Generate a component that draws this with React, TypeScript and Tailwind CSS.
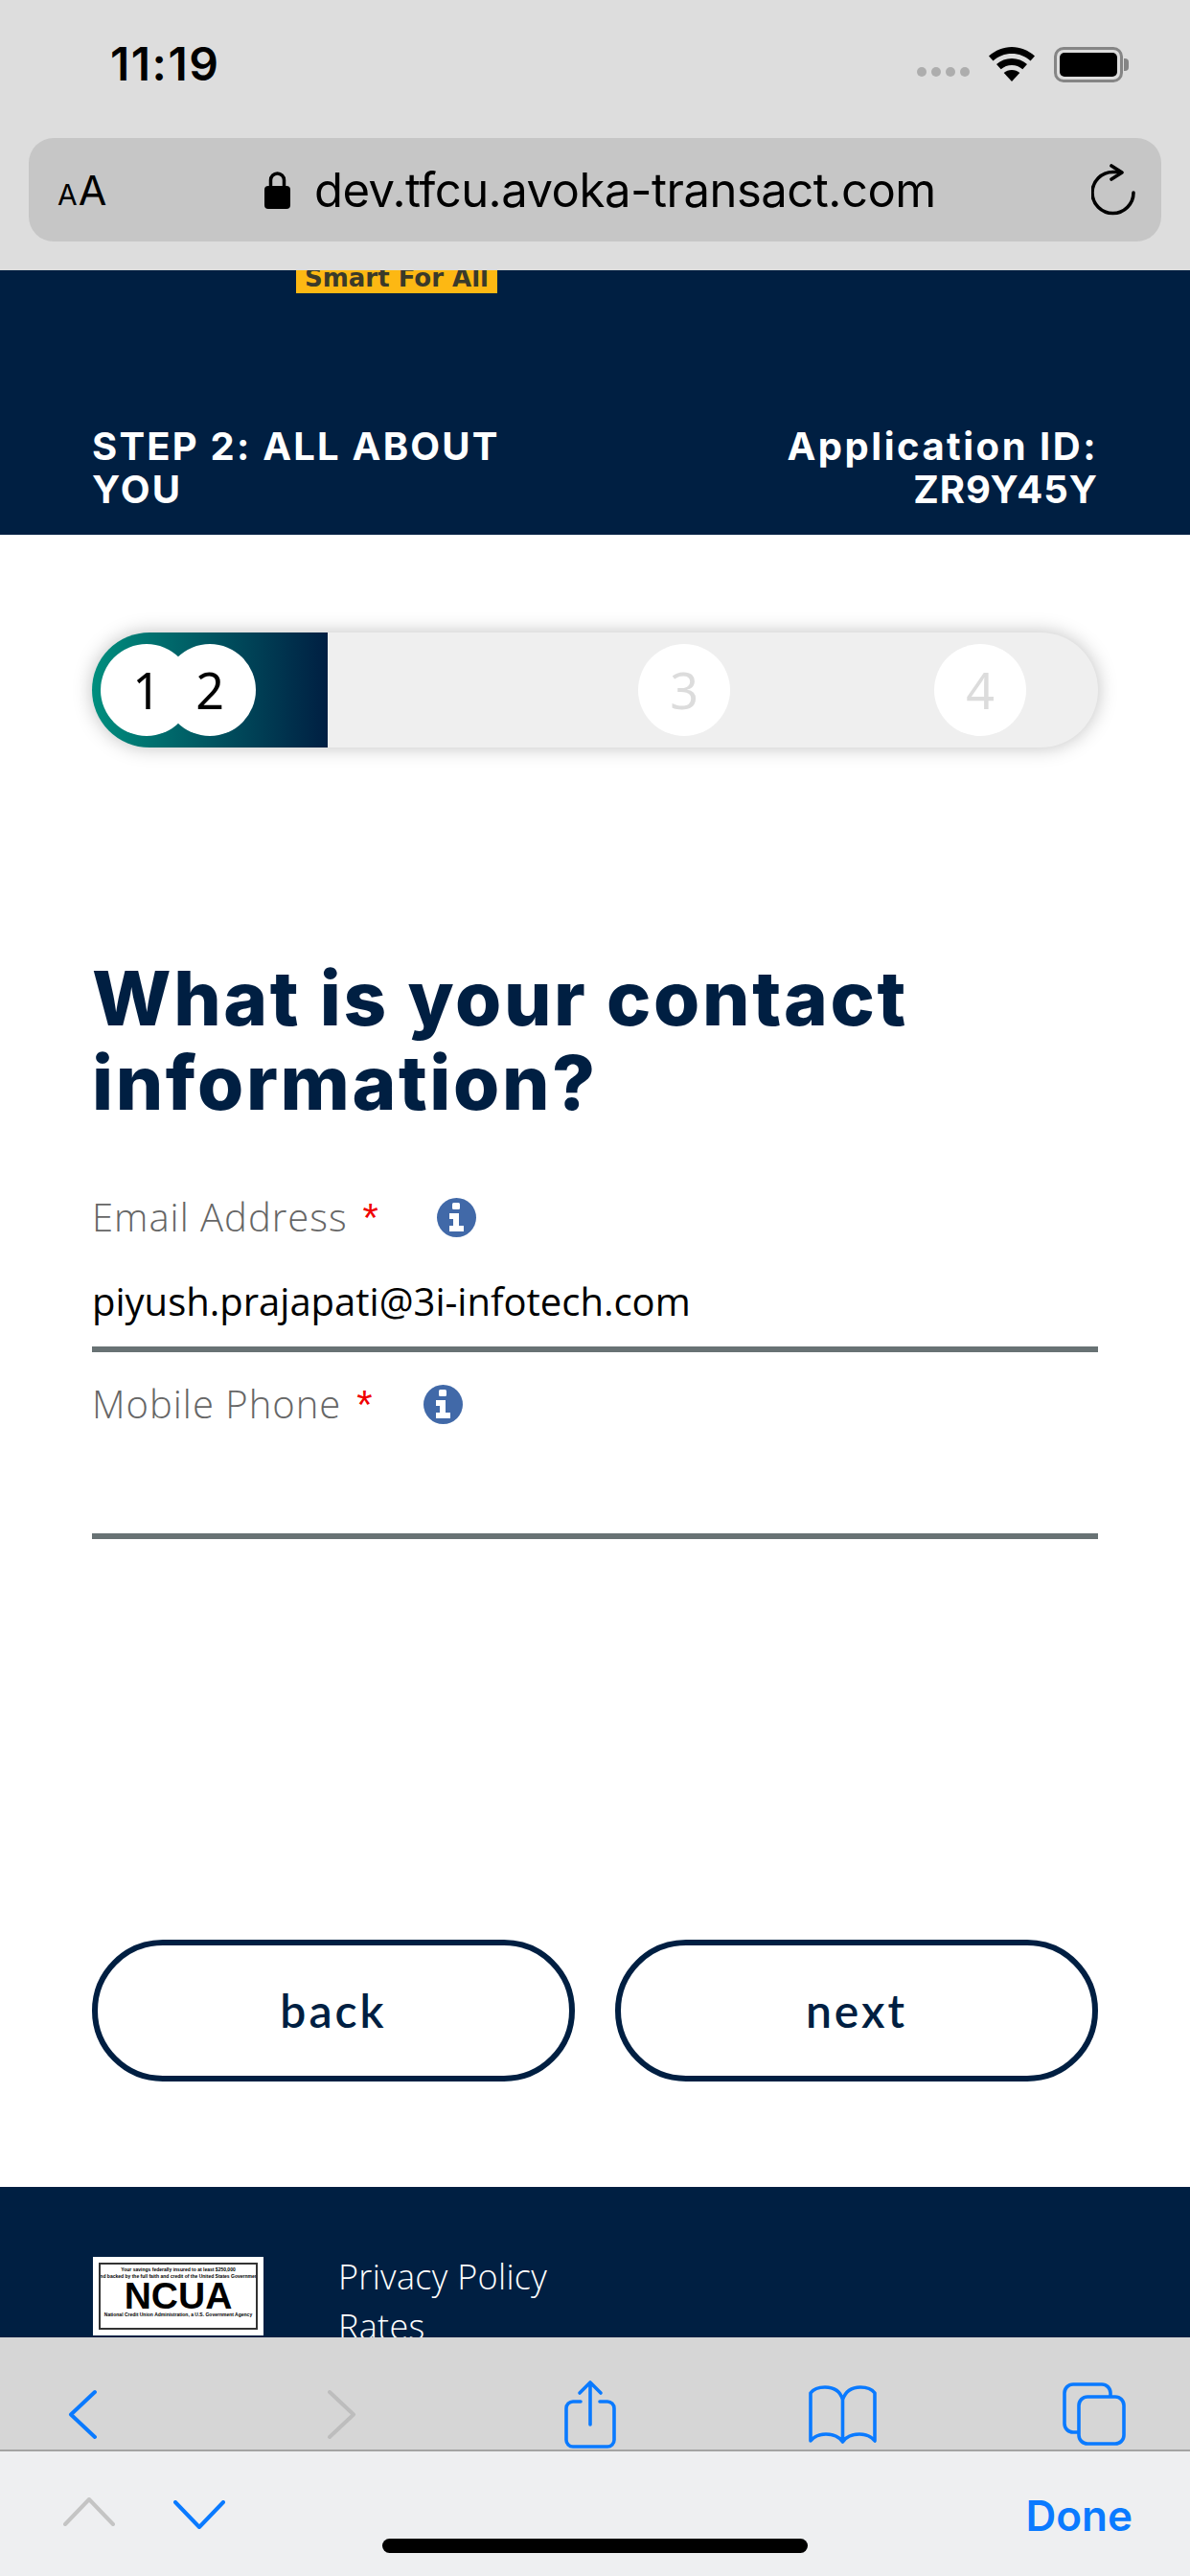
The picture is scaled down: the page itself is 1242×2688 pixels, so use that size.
import type { ReactNode } from 'react';

const HEAD_FONT = 'font-["Inter",sans-serif]';
const BODY_FONT = 'font-["Open_Sans",sans-serif]';

function InfoIcon({ className }: { className: string }) {
  return (
    <svg viewBox="0 0 41 41" className={className}>
      <circle cx="20.5" cy="20.500" r="20.500" fill="#4169a8" />
      <rect x="16" y="5" width="8" height="7" rx="1.500" fill="#fff" />
      <path d="M13 16h10v13h5v6H13v-6h4v-7h-4z" fill="#fff" />
    </svg>
  );
}

function Field({ label, value, iconGap }: { label: string; value?: string; iconGap: string }) {
  return (
    <div className="flex flex-col">
      <div className={`flex h-[54px] items-center text-[40px] font-light tracking-[1px] text-[#666666] ${BODY_FONT}`}>
        <span>{label}</span>
        <span className="ml-[16px] mt-[2px] h-[40px] font-['Liberation_Sans',sans-serif] text-[42px] font-normal leading-[40px] text-[#f00000]">*</span>
        <InfoIcon className={`h-[41px] w-[41px] ${iconGap}`} />
      </div>
      <div className={`flex h-[108px] items-center pt-[14px] text-[40px] text-black ${BODY_FONT}`}>{value}</div>
      <div className="h-[6px] bg-[#687274]" />
    </div>
  );
}

function Step({ n, active, className = '' }: { n: number; active?: boolean; className?: string }) {
  return (
    <div
      className={`relative flex h-[96px] w-[96px] shrink-0 items-center justify-center rounded-full bg-white text-[52px] font-["Noto_Sans",sans-serif] ${
        active ? 'text-black' : 'text-[#dcdcdc]'
      } ${className}`}
    >
      {n}
    </div>
  );
}

function PillButton({ children }: { children: ReactNode }) {
  return (
    <button className={`flex h-[148px] w-[504px] items-center justify-center rounded-full border-[6px] border-[#001f42] font-["Lato",sans-serif] text-[48px] font-semibold tracking-[3px] text-[#001f42]`}>
      {children}
    </button>
  );
}

function NcuaLogo() {
  return (
    <div className="mt-[5px] h-[82px] w-[178px] shrink-0 bg-white p-[6px] font-['Liberation_Sans',sans-serif]">
      <div className="flex h-full flex-col items-center overflow-hidden border-[2px] border-[#333] pt-[2px] text-center text-black">
        <div className="whitespace-nowrap text-[5px] font-bold leading-[7px]">Your savings federally insured to at least $250,000</div>
        <div className="whitespace-nowrap text-[5px] font-bold leading-[6px]">and backed by the full faith and credit of the United States Government</div>
        <div className="mt-[1px] text-[39px] font-bold leading-[33px]">NCUA</div>
        <div className="whitespace-nowrap text-[5px] font-bold leading-[7px]">National Credit Union Administration, a U.S. Government Agency</div>
      </div>
    </div>
  );
}

export default function App() {
  return (
    <div className="flex h-[2688px] w-[1242px] flex-col overflow-hidden bg-white">
      {/* Safari top chrome */}
      <div className="h-[282px] shrink-0 bg-[#dddddd]">
        <div className="flex h-[134px] items-center pl-[115px] pr-[64px]">
          <span className="text-[48px] font-semibold tracking-[1.5px] text-black font-['Inter',sans-serif]">11:19</span>
          <div className="ml-auto flex items-center">
            <div className="mt-[16px] flex gap-[5px]">
              <i className="h-[10px] w-[10px] rounded-full bg-[#adadad]" />
              <i className="h-[10px] w-[10px] rounded-full bg-[#adadad]" />
              <i className="h-[10px] w-[10px] rounded-full bg-[#adadad]" />
              <i className="h-[10px] w-[10px] rounded-full bg-[#adadad]" />
            </div>
            <svg viewBox="0 0 48 36" className="ml-[20px] h-[36px] w-[48px]">
              <path d="M24 0C15 0 7 3.500 0 9.500l4.500 5C10 9.500 16.500 7 24 7s14 2.500 19.500 7.500l4.500-5C41 3.500 33 0 24 0z" />
              <path d="M24 12c-6 0-11.500 2-16 6l4.700 5.200C16 20.500 19.800 19 24 19s8 1.500 11.300 4.200L40 18c-4.500-4-10-6-16-6z" />
              <path d="M24 24c-3.300 0-6 1-8.300 3L24 36l8.300-9c-2.300-2-5-3-8.300-3z" />
            </svg>
            <div className="ml-[20px] flex items-center">
              <div className="h-[37px] w-[72px] rounded-[10px] border-[3px] border-[#858585] p-[3px]">
                <div className="h-full rounded-[5px] bg-black" />
              </div>
              <div className="ml-[1px] h-[13px] w-[5px] rounded-r-[4px] bg-[#858585]" />
            </div>
          </div>
        </div>
        <div className="mx-[30px] mt-[10px] flex h-[108px] items-center rounded-[26px] bg-[#c6c6c6] pl-[30px] pr-[27px] text-black">
          <div className="flex w-[60px] items-baseline font-['Inter',sans-serif]">
            <span className="text-[30px] leading-none">A</span>
            <span className="ml-[1px] text-[43px] leading-none">A</span>
          </div>
          <svg viewBox="0 0 27 40" className="ml-[156px] h-[40px] w-[27px] shrink-0">
            <path d="M6.500 17V10a7 7 0 0 1 14 0v7" fill="none" stroke="#000" strokeWidth="3.500" />
            <rect x="0" y="16" width="27" height="24" rx="4" />
          </svg>
          <span className="ml-[25px] text-[49px] leading-none tracking-[-0.5px] font-['Inter',sans-serif]">dev.tfcu.avoka-transact.com</span>
          <svg viewBox="0 0 46 54" className="ml-auto h-[54px] w-[46px] shrink-0" fill="none" stroke="#000" strokeWidth="3.600" strokeLinecap="round" strokeLinejoin="round">
            <path d="M44 30a21.500 21.500 0 1 1-21.500-21.500H29" />
            <path d="M21 2l11 7-11 7" />
          </svg>
        </div>
      </div>

      {/* Page content, clipped by the browser bars */}
      <div className="min-h-0 flex-1 overflow-hidden">
        <div className="h-[276px] bg-[#001f42]">
          <div className="ml-[309px] h-[24px] w-[210px] overflow-hidden bg-[#fdb813] text-center font-['DejaVu_Sans',sans-serif] text-[26px] font-bold leading-[16px] text-[#3a3a2a]">
            Smart For All
          </div>
          <div className={`mt-[137px] flex justify-between px-[96px] text-[40px] font-bold leading-[45px] text-white ${HEAD_FONT}`}>
            <div className="w-[440px] tracking-[2.2px]">STEP 2: ALL ABOUT YOU</div>
            <div className="text-right">
              <div className="tracking-[2.5px]">Application ID:</div>
              <div className="tracking-[1px]">ZR9Y45Y</div>
            </div>
          </div>
        </div>

        <div className="px-[96px]">
          <div className="relative mt-[102px] flex h-[120px] items-center rounded-full bg-[#efefef] pl-[9px] shadow-[0_0_20px_rgba(0,0,0,0.25)]">
            <div className="absolute inset-y-0 left-0 w-[246px] rounded-l-full rounded-r-[3px] bg-gradient-to-r from-[#008f7e] to-[#001f42]" />
            <Step n={1} active />
            <Step n={2} active className="-ml-[30px]" />
            <Step n={3} className="ml-[399px]" />
            <Step n={4} className="ml-[213px]" />
          </div>

          <h1 className={`mt-[218px] text-[78px] font-extrabold leading-[88px] tracking-[2.6px] text-[#001f42] ${HEAD_FONT}`}>
            What is your contact information?
          </h1>

          <div className="mt-[69px] flex flex-col gap-[27px]">
            <Field label="Email Address" value="piyush.prajapati@3i-infotech.com" iconGap="ml-[60px]" />
            <Field label="Mobile Phone" iconGap="ml-[52px]" />
          </div>

          <div className="mt-[418px] flex justify-between">
            <PillButton>back</PillButton>
            <PillButton>next</PillButton>
          </div>
        </div>

        <div className="mt-[110px] flex bg-[#001f42] pb-[40px] pl-[97px] pt-[68px]">
          <NcuaLogo />
          <div className={`ml-[78px] text-[36px] font-light leading-[52px] tracking-[0.3px] text-white ${BODY_FONT}`}>
            <div>Privacy Policy</div>
            <div>Rates</div>
          </div>
        </div>
      </div>

      {/* Safari bottom toolbar + keyboard accessory */}
      <div className="h-[249px] shrink-0">
        <div className="flex h-[119px] items-center border-b-[2px] border-[#a3a3a3] bg-[#d6d6d6] pl-[71px] pt-[43px]">
          <svg viewBox="0 0 31 53" className="h-[53px] w-[31px]" fill="none" stroke="#0a7aff" strokeWidth="4" strokeLinecap="round" strokeLinejoin="round"><path d="M28 3L3 26.500 28 50" /></svg>
          <svg viewBox="0 0 31 53" className="ml-[239px] h-[53px] w-[31px]" fill="none" stroke="#bdbdbd" strokeWidth="4" strokeLinecap="round" strokeLinejoin="round"><path d="M3 3l25 23.500L3 50" /></svg>
          <svg viewBox="0 0 54 72" className="ml-[217px] h-[72px] w-[54px]" fill="none" stroke="#0a7aff" strokeWidth="3.600" strokeLinecap="round" strokeLinejoin="round">
            <path d="M17 23H9a7 7 0 0 0-7 7v33a7 7 0 0 0 7 7h36a7 7 0 0 0 7-7V30a7 7 0 0 0-7-7h-8" />
            <path d="M27 47V3M16 14L27 3l11 11" />
          </svg>
          <svg viewBox="0 0 71 61" className="ml-[201px] h-[61px] w-[71px]" fill="none" stroke="#0a7aff" strokeWidth="3.600" strokeLinejoin="round">
            <path d="M35.500 15C33 6 26 2 17 2 10 2 5 4 2 8v50c4-5 10-7 16-7 8 0 14 3 17.500 8 3.500-5 9.500-8 17.500-8 6 0 12 2 16 7V8c-3-4-8-6-15-6-9 0-15.500 4-18.500 13zv44" />
          </svg>
          <svg viewBox="0 0 66 66" className="ml-[194px] h-[66px] w-[66px]" fill="none" stroke="#0a7aff" strokeWidth="3.600" strokeLinejoin="round">
            <path d="M50 15v-4a9 9 0 0 0-9-9H11a9 9 0 0 0-9 9v32a9 9 0 0 0 9 9h6" />
            <rect x="17" y="15" width="47" height="49" rx="9" />
          </svg>
        </div>
        <div className="relative flex h-[130px] items-start bg-[#eeeff1] pl-[66px] pr-[60px] pt-[48px]">
          <svg viewBox="0 0 54 30" className="h-[30px] w-[54px]" fill="none" stroke="#c4c4c4" strokeWidth="4" strokeLinecap="round" strokeLinejoin="round"><path d="M2 28L27 2l25 26" /></svg>
          <svg viewBox="0 0 54 30" className="ml-[61px] mt-[3px] h-[30px] w-[54px]" fill="none" stroke="#0a7aff" strokeWidth="4" strokeLinecap="round" strokeLinejoin="round"><path d="M2 2l25 26L52 2" /></svg>
          <span className="ml-auto -mt-[6px] text-[44px] font-semibold leading-[50px] text-[#0a7aff] font-['Inter',sans-serif]">Done</span>
          <div className="absolute bottom-[24px] left-[399px] h-[15px] w-[444px] rounded-full bg-black" />
        </div>
      </div>
    </div>
  );
}
